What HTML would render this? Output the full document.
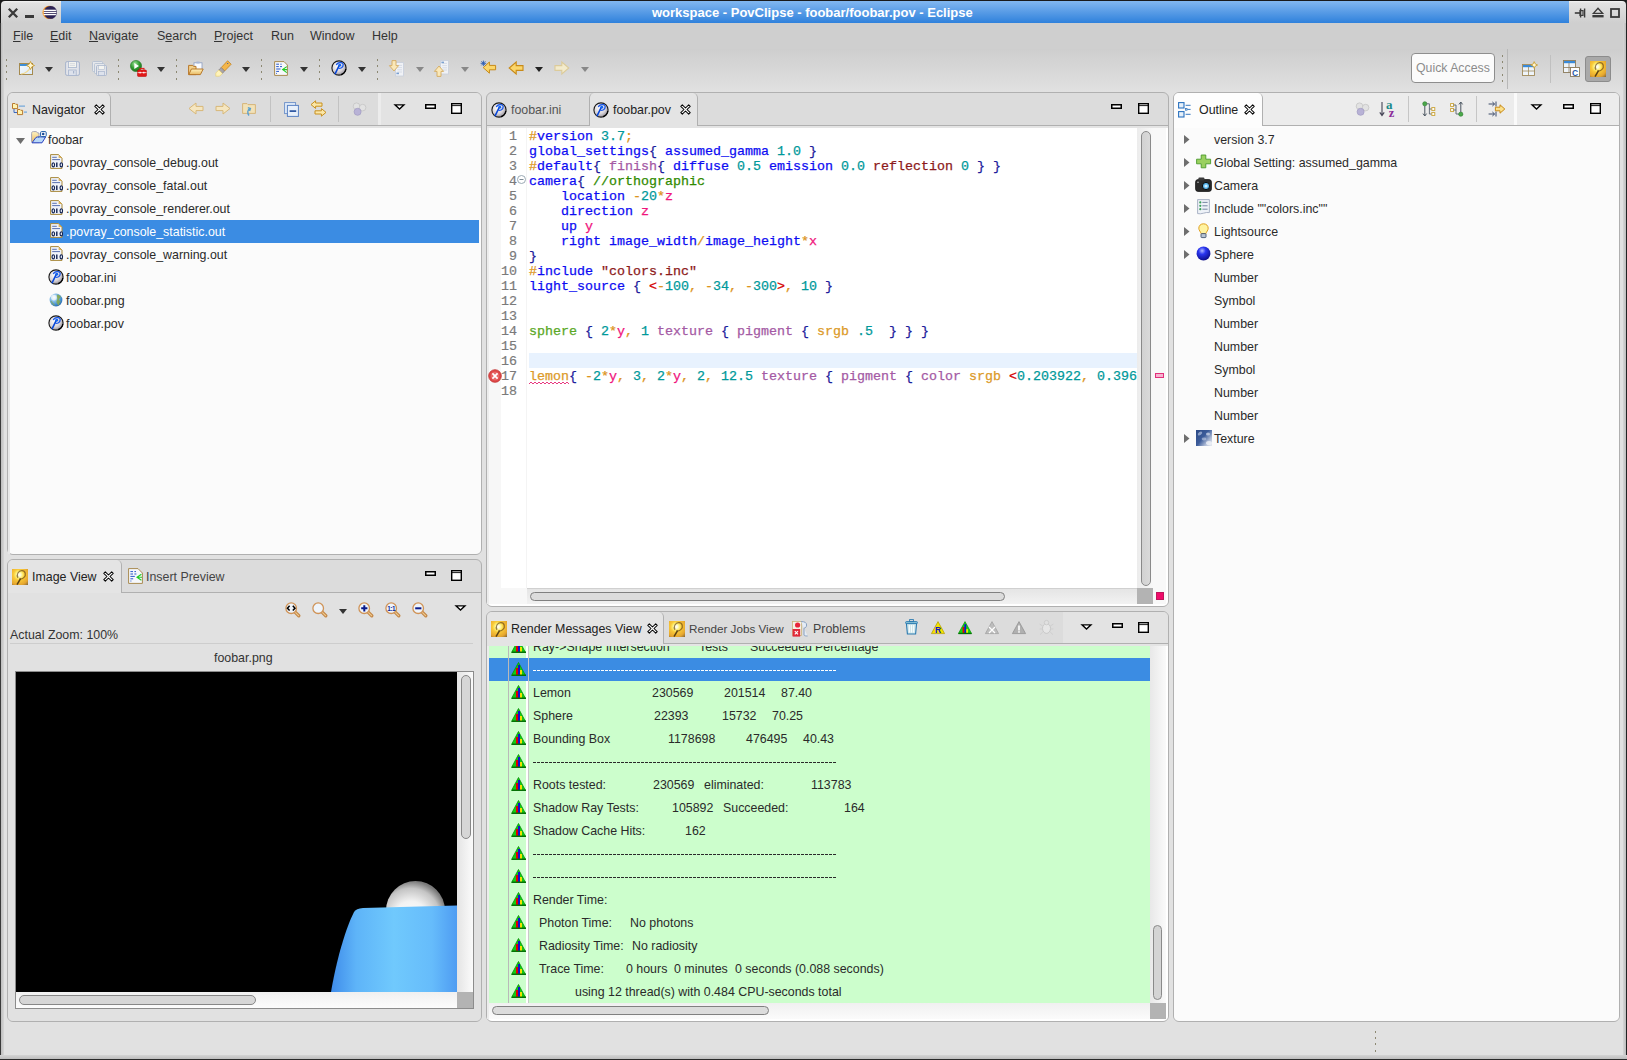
<!DOCTYPE html><html><head><meta charset="utf-8"><title>Eclipse</title><style>
*{box-sizing:border-box}
html,body{margin:0;padding:0}
body{width:1627px;height:1060px;overflow:hidden;position:relative;background:#e1e1e1;font-family:"Liberation Sans",sans-serif;font-size:12.4px;color:#2f2f2f}
.a{position:absolute}
.t{position:absolute;white-space:pre;line-height:16px}
.m{position:absolute;white-space:pre;font-family:"Liberation Mono",monospace;font-size:13.33px;line-height:15px}
.m span{-webkit-text-stroke:0.25px currentColor}
svg{position:absolute;overflow:visible}
</style></head><body><!DOCTYPE html><html><head><meta charset="utf-8"><title>Eclipse</title><style>
*{box-sizing:border-box}
html,body{margin:0;padding:0}
body{width:1627px;height:1060px;overflow:hidden;position:relative;background:#e1e1e1;font-family:"Liberation Sans",sans-serif;font-size:12.4px;color:#2f2f2f}
.a{position:absolute}
.t{position:absolute;white-space:pre;line-height:16px}
.m{position:absolute;white-space:pre;font-family:"Liberation Mono",monospace;font-size:13.33px;line-height:15px}
.m span{-webkit-text-stroke:0.25px currentColor}
svg{position:absolute;overflow:visible}
</style></head><body><div class="a" style="left:0px;top:0px;width:1627px;height:1060px;background:#e1e1e1"></div><div class="a" style="left:0px;top:0px;width:1627px;height:23px;background:#1a1a1a"></div><div class="a" style="left:1px;top:1px;width:60px;height:22px;background:linear-gradient(#f4f4f4 0,#e2e2e2 2px,#cfcfcf 100%);border-top-left-radius:4px"></div><div class="a" style="left:61px;top:1px;width:1508px;height:22px;background:linear-gradient(#82b7f0,#2f81dc)"></div><div class="a" style="left:1569px;top:1px;width:57px;height:22px;background:linear-gradient(#f4f4f4 0,#e2e2e2 2px,#cfcfcf 100%);border-top-right-radius:4px"></div><div class="t" style="left:652px;top:4.5px;font-weight:bold;color:#fff;font-size:13px">workspace - PovClipse - foobar/foobar.pov - Eclipse</div><div class="a" style="left:0px;top:23px;width:1627px;height:26px;background:#cfcfcf"></div><div class="a" style="left:0px;top:49px;width:1627px;height:43px;background:linear-gradient(#cecece,#e1e1e1)"></div><div class="a" style="left:0px;top:23px;width:1px;height:1037px;background:#3a3a3a"></div><div class="a" style="left:1px;top:23px;width:3px;height:1037px;background:linear-gradient(90deg,#bdbdbd,#d6d6d6)"></div><div class="a" style="left:1626px;top:0px;width:1px;height:1060px;background:#222"></div><div class="a" style="left:1623px;top:23px;width:3px;height:1037px;background:linear-gradient(90deg,#d6d6d6,#bdbdbd)"></div><div class="a" style="left:0px;top:1059px;width:1627px;height:1px;background:#2a2a2a"></div><div class="a" style="left:0px;top:1055px;width:1627px;height:4px;background:linear-gradient(#d4d4d4,#bdbdbd)"></div><div class="t" style="left:13px;top:28px;font-size:12.5px;color:#333"><u>F</u>ile</div><div class="t" style="left:50px;top:28px;font-size:12.5px;color:#333"><u>E</u>dit</div><div class="t" style="left:89px;top:28px;font-size:12.5px;color:#333"><u>N</u>avigate</div><div class="t" style="left:157px;top:28px;font-size:12.5px;color:#333">S<u>e</u>arch</div><div class="t" style="left:214px;top:28px;font-size:12.5px;color:#333"><u>P</u>roject</div><div class="t" style="left:271px;top:28px;font-size:12.5px;color:#333">Run</div><div class="t" style="left:310px;top:28px;font-size:12.5px;color:#333">Window</div><div class="t" style="left:372px;top:28px;font-size:12.5px;color:#333">Help</div><div class="a" style="left:7px;top:92px;width:475px;height:463px;border:1px solid #b0b0b0;border-radius:6px;background:#dcdcdc"></div><div class="a" style="left:7px;top:559px;width:475px;height:463px;border:1px solid #b0b0b0;border-radius:6px;background:#dcdcdc"></div><div class="a" style="left:486px;top:92px;width:683px;height:515px;border:1px solid #b0b0b0;border-radius:6px;background:#dcdcdc"></div><div class="a" style="left:486px;top:611px;width:683px;height:411px;border:1px solid #b0b0b0;border-radius:6px;background:#dcdcdc"></div><div class="a" style="left:1173px;top:92px;width:447px;height:930px;border:1px solid #b0b0b0;border-radius:6px;background:#dcdcdc"></div><div class="a" style="left:8px;top:125px;width:473px;height:1px;background:#b0b0b0"></div><div class="a" style="left:8px;top:126px;width:473px;height:428px;background:#fbfbfb;border-bottom-left-radius:5px;border-bottom-right-radius:5px"></div><div class="a" style="left:8px;top:126px;width:473px;height:2px;background:#e4e4e4"></div><div class="a" style="left:8px;top:128px;width:2px;height:426px;background:#e8e8e8"></div><div class="a" style="left:8px;top:93px;width:103px;height:33px;background:#e4e4e4;border-right:1px solid #b0b0b0;border-top-left-radius:5px;border-top-right-radius:5px"></div><div class="t" style="left:32px;top:102px;color:#222">Navigator</div><div class="a" style="left:378px;top:93px;width:103px;height:32px;background:#e3e3e3;border-top-right-radius:5px"></div><div class="t" style="left:48px;top:132px;color:#2a2a2a">foobar</div><div class="t" style="left:66px;top:155px;color:#2a2a2a">.povray_console_debug.out</div><div class="t" style="left:66px;top:178px;color:#2a2a2a">.povray_console_fatal.out</div><div class="t" style="left:66px;top:201px;color:#2a2a2a">.povray_console_renderer.out</div><div class="a" style="left:10px;top:220px;width:469px;height:23px;background:#3b8ce3"></div><div class="t" style="left:66px;top:224px;color:#fff">.povray_console_statistic.out</div><div class="t" style="left:66px;top:247px;color:#2a2a2a">.povray_console_warning.out</div><div class="t" style="left:66px;top:270px;color:#2a2a2a">foobar.ini</div><div class="t" style="left:66px;top:293px;color:#2a2a2a">foobar.png</div><div class="t" style="left:66px;top:316px;color:#2a2a2a">foobar.pov</div><div class="a" style="left:8px;top:592px;width:473px;height:429px;background:#e1e1e1;border-bottom-left-radius:5px;border-bottom-right-radius:5px"></div><div class="a" style="left:8px;top:592px;width:473px;height:1px;background:#b0b0b0"></div><div class="a" style="left:8px;top:560px;width:114px;height:33px;background:#e4e4e4;border-right:1px solid #b0b0b0;border-top-left-radius:5px;border-top-right-radius:5px"></div><div class="t" style="left:32px;top:569px;color:#222">Image View</div><div class="t" style="left:146px;top:569px;color:#444">Insert Preview</div><div class="t" style="left:10px;top:627px;color:#333">Actual Zoom: 100%</div><div class="a" style="left:10px;top:643px;width:463px;height:1px;background:#cdcdcd"></div><div class="t" style="left:214px;top:650px;color:#333">foobar.png</div><div class="a" style="left:15px;top:671px;width:459px;height:338px;background:#f5f5f5;border:1px solid #8c8c8c"></div><div class="a" style="left:16px;top:672px;width:441px;height:320px;background:#000"></div><svg style="left:16px;top:672px" width="441" height="320"><defs><radialGradient id="gSph" cx="0.42" cy="0.62" r="0.62"><stop offset="0" stop-color="#ffffff"/><stop offset="0.45" stop-color="#f2f2f2"/><stop offset="0.8" stop-color="#c4c4c4"/><stop offset="1" stop-color="#7a7a7a"/></radialGradient><linearGradient id="gLem" x1="0" y1="0" x2="1" y2="0"><stop offset="0" stop-color="#3f8cea"/><stop offset="0.2" stop-color="#5eb4f8"/><stop offset="0.5" stop-color="#70c9fd"/><stop offset="0.8" stop-color="#66bcfb"/><stop offset="1" stop-color="#4e9cf2"/></linearGradient></defs><circle cx="399.5" cy="238.5" r="29.5" fill="url(#gSph)"/><path d="M315 320 C321 285 330 256 338 240 Q340 236.5 347 236 L441 233.5 V320 Z" fill="url(#gLem)"/></svg><div class="a" style="left:457px;top:672px;width:16px;height:320px;background:linear-gradient(90deg,#e4e4e4,#fbfbfb)"></div><div class="a" style="left:461px;top:675px;width:10px;height:164px;background:#d6d6d6;border:1px solid #878787;border-radius:5px"></div><div class="a" style="left:16px;top:992px;width:441px;height:16px;background:linear-gradient(#f0f0f0,#fcfcfc)"></div><div class="a" style="left:19px;top:995px;width:237px;height:10px;background:#d6d6d6;border:1px solid #878787;border-radius:5px"></div><div class="a" style="left:457px;top:992px;width:16px;height:16px;background:#b3b3b3"></div><div class="a" style="left:487px;top:125px;width:681px;height:1px;background:#b0b0b0"></div><div class="a" style="left:487px;top:126px;width:681px;height:480px;background:#fff;border-bottom-left-radius:5px;border-bottom-right-radius:5px"></div><div class="a" style="left:487px;top:126px;width:681px;height:2px;background:#e4e4e4"></div><div class="a" style="left:487px;top:128px;width:2px;height:476px;background:#ececec"></div><div class="a" style="left:589px;top:93px;width:109px;height:33px;background:#e4e4e4;border-left:1px solid #b0b0b0;border-right:1px solid #b0b0b0;border-top-left-radius:5px;border-top-right-radius:5px"></div><div class="t" style="left:511px;top:102px;color:#555">foobar.ini</div><div class="t" style="left:613px;top:102px;color:#222">foobar.pov</div><div class="a" style="left:487px;top:643px;width:681px;height:1px;background:#b0b0b0"></div><div class="a" style="left:487px;top:644px;width:681px;height:377px;background:#fff;border-bottom-left-radius:5px;border-bottom-right-radius:5px"></div><div class="a" style="left:487px;top:644px;width:681px;height:2px;background:#e4e4e4"></div><div class="a" style="left:487px;top:646px;width:2px;height:373px;background:#ececec"></div><div class="a" style="left:487px;top:612px;width:177px;height:32px;background:#e4e4e4;border-right:1px solid #b0b0b0;border-top-left-radius:5px;border-top-right-radius:5px"></div><div class="t" style="left:511px;top:621px;color:#222">Render Messages View</div><div class="t" style="left:689px;top:621px;color:#444;font-size:11.7px">Render Jobs View</div><div class="t" style="left:813px;top:621px;color:#444">Problems</div><div class="a" style="left:1174px;top:125px;width:445px;height:1px;background:#b0b0b0"></div><div class="a" style="left:1174px;top:126px;width:445px;height:895px;background:#fbfbfb;border-bottom-left-radius:5px;border-bottom-right-radius:5px"></div><div class="a" style="left:1174px;top:93px;width:445px;height:32px;background:#ececec;border-top-left-radius:5px;border-top-right-radius:5px"></div><div class="a" style="left:1174px;top:93px;width:89px;height:35px;background:#fdfdfd;border-top-left-radius:5px;border-top-right-radius:5px"></div><div class="a" style="left:1174px;top:93px;width:89px;height:33px;border-right:1px solid #b0b0b0;border-top-right-radius:5px"></div><div class="a" style="left:1517px;top:93px;width:102px;height:32px;background:#ececec;border-top-right-radius:5px"></div><div class="a" style="left:1514px;top:93px;width:3px;height:32px;background:#fafafa"></div><div class="t" style="left:1199px;top:102px;color:#222">Outline</div><div class="t" style="left:1214px;top:132px;color:#2a2a2a">version 3.7</div><div class="t" style="left:1214px;top:155px;color:#2a2a2a">Global Setting: assumed_gamma</div><div class="t" style="left:1214px;top:178px;color:#2a2a2a">Camera</div><div class="t" style="left:1214px;top:201px;color:#2a2a2a">Include &quot;&quot;colors.inc&quot;&quot;</div><div class="t" style="left:1214px;top:224px;color:#2a2a2a">Lightsource</div><div class="t" style="left:1214px;top:247px;color:#2a2a2a">Sphere</div><div class="t" style="left:1214px;top:270px;color:#2a2a2a">Number</div><div class="t" style="left:1214px;top:293px;color:#2a2a2a">Symbol</div><div class="t" style="left:1214px;top:316px;color:#2a2a2a">Number</div><div class="t" style="left:1214px;top:339px;color:#2a2a2a">Number</div><div class="t" style="left:1214px;top:362px;color:#2a2a2a">Symbol</div><div class="t" style="left:1214px;top:385px;color:#2a2a2a">Number</div><div class="t" style="left:1214px;top:408px;color:#2a2a2a">Number</div><div class="t" style="left:1214px;top:431px;color:#2a2a2a">Texture</div><div class="a" style="left:489px;top:128px;width:12px;height:460px;background:#f7f7f7"></div><div class="a" style="left:501px;top:128px;width:26px;height:460px;background:#fff"></div><div class="a" style="left:526px;top:128px;width:1px;height:460px;background:#f4f4f4"></div><div class="a" style="left:529px;top:353px;width:608px;height:15px;background:#e8f2fe"></div><div class="a" style="left:489px;top:129px;width:648px;height:459px;overflow:hidden;-webkit-text-stroke:0.2px currentColor"><div class="m" style="left:20px;top:0px;color:#7a7a7a">1</div><div class="m" style="left:40px;top:0px"><span style="color:#dc9420">#</span><span style="color:#0c0cf2">version</span><span style="color:#00999a"> 3.7</span><span style="color:#dc9420">;</span></div><div class="m" style="left:20px;top:15px;color:#7a7a7a">2</div><div class="m" style="left:40px;top:15px"><span style="color:#0c0cf2">global_settings</span><span style="color:#1c1c9c">{</span><span style="color:#0c0cf2"> assumed_gamma</span><span style="color:#00999a"> 1.0</span><span style="color:#1c1c9c"> }</span></div><div class="m" style="left:20px;top:30px;color:#7a7a7a">3</div><div class="m" style="left:40px;top:30px"><span style="color:#dc9420">#</span><span style="color:#0c0cf2">default</span><span style="color:#1c1c9c">{</span><span style="color:#a45aa4"> finish</span><span style="color:#1c1c9c">{</span><span style="color:#0c0cf2"> diffuse</span><span style="color:#00999a"> 0.5</span><span style="color:#0c0cf2"> emission</span><span style="color:#00999a"> 0.0</span><span style="color:#8c1a1a"> reflection</span><span style="color:#00999a"> 0</span><span style="color:#1c1c9c"> } }</span></div><div class="m" style="left:20px;top:45px;color:#7a7a7a">4</div><div class="m" style="left:40px;top:45px"><span style="color:#0c0cf2">camera</span><span style="color:#1c1c9c">{</span><span style="color:#2f8a00"> //orthographic</span></div><div class="m" style="left:20px;top:60px;color:#7a7a7a">5</div><div class="m" style="left:40px;top:60px"><span style="color:#0c0cf2">    location </span><span style="color:#dc9420">-</span><span style="color:#00999a">20</span><span style="color:#dc9420">*</span><span style="color:#f0147c">z</span></div><div class="m" style="left:20px;top:75px;color:#7a7a7a">6</div><div class="m" style="left:40px;top:75px"><span style="color:#0c0cf2">    direction </span><span style="color:#f0147c">z</span></div><div class="m" style="left:20px;top:90px;color:#7a7a7a">7</div><div class="m" style="left:40px;top:90px"><span style="color:#0c0cf2">    up </span><span style="color:#f0147c">y</span></div><div class="m" style="left:20px;top:105px;color:#7a7a7a">8</div><div class="m" style="left:40px;top:105px"><span style="color:#0c0cf2">    right image_width</span><span style="color:#dc9420">/</span><span style="color:#0c0cf2">image_height</span><span style="color:#dc9420">*</span><span style="color:#f0147c">x</span></div><div class="m" style="left:20px;top:120px;color:#7a7a7a">9</div><div class="m" style="left:40px;top:120px"><span style="color:#1c1c9c">}</span></div><div class="m" style="left:12px;top:135px;color:#7a7a7a">10</div><div class="m" style="left:40px;top:135px"><span style="color:#dc9420">#</span><span style="color:#0c0cf2">include </span><span style="color:#8c1a1a">&quot;colors.inc&quot;</span></div><div class="m" style="left:12px;top:150px;color:#7a7a7a">11</div><div class="m" style="left:40px;top:150px"><span style="color:#0c0cf2">light_source</span><span style="color:#1c1c9c"> { </span><span style="color:#d40000">&lt;</span><span style="color:#dc9420">-</span><span style="color:#00999a">100</span><span style="color:#dc9420">, -</span><span style="color:#00999a">34</span><span style="color:#dc9420">, -</span><span style="color:#00999a">300</span><span style="color:#d40000">&gt;</span><span style="color:#dc9420">, </span><span style="color:#00999a">10</span><span style="color:#1c1c9c"> }</span></div><div class="m" style="left:12px;top:165px;color:#7a7a7a">12</div><div class="m" style="left:12px;top:180px;color:#7a7a7a">13</div><div class="m" style="left:12px;top:195px;color:#7a7a7a">14</div><div class="m" style="left:40px;top:195px"><span style="color:#5aa826">sphere</span><span style="color:#1c1c9c"> { </span><span style="color:#00999a">2</span><span style="color:#dc9420">*</span><span style="color:#f0147c">y</span><span style="color:#dc9420">, </span><span style="color:#00999a">1</span><span style="color:#a45aa4"> texture</span><span style="color:#1c1c9c"> { </span><span style="color:#a45aa4">pigment</span><span style="color:#1c1c9c"> { </span><span style="color:#dc9a28">srgb</span><span style="color:#00999a"> .5  </span><span style="color:#1c1c9c">} } }</span></div><div class="m" style="left:12px;top:210px;color:#7a7a7a">15</div><div class="m" style="left:12px;top:225px;color:#7a7a7a">16</div><div class="m" style="left:12px;top:240px;color:#7a7a7a">17</div><div class="m" style="left:40px;top:240px"><span style="color:#dc9a28">lemon</span><span style="color:#1c1c9c">{ </span><span style="color:#dc9420">-</span><span style="color:#00999a">2</span><span style="color:#dc9420">*</span><span style="color:#f0147c">y</span><span style="color:#dc9420">, </span><span style="color:#00999a">3</span><span style="color:#dc9420">, </span><span style="color:#00999a">2</span><span style="color:#dc9420">*</span><span style="color:#f0147c">y</span><span style="color:#dc9420">, </span><span style="color:#00999a">2</span><span style="color:#dc9420">, </span><span style="color:#00999a">12.5</span><span style="color:#a45aa4"> texture</span><span style="color:#1c1c9c"> { </span><span style="color:#a45aa4">pigment</span><span style="color:#1c1c9c"> { </span><span style="color:#a45aa4">color </span><span style="color:#dc9a28">srgb </span><span style="color:#d40000">&lt;</span><span style="color:#00999a">0.203922</span><span style="color:#dc9420">, </span><span style="color:#00999a">0.396</span></div><div class="m" style="left:12px;top:255px;color:#7a7a7a">18</div></div><svg style="left:517px;top:175px" width="10" height="10"><circle cx="4.5" cy="4.5" r="4" fill="#fff" stroke="#9aa9b4" stroke-width="1"/><line x1="2.5" y1="4.5" x2="6.5" y2="4.5" stroke="#7d8b96" stroke-width="1"/></svg><svg style="left:488px;top:369px" width="14" height="14"><circle cx="7" cy="7" r="6.3" fill="#e04a4a" stroke="#c03030" stroke-width="0.8"/><circle cx="7" cy="7" r="4.2" fill="#ee8a8a" opacity="0.5"/><path d="M4.4 4.4L9.6 9.6M9.6 4.4L4.4 9.6" stroke="#fff" stroke-width="1.7"/></svg><svg style="left:529px;top:381px" width="41" height="4"><path d="M0 3 L2 1 L4 3 L6 1 L8 3 L10 1 L12 3 L14 1 L16 3 L18 1 L20 3 L22 1 L24 3 L26 1 L28 3 L30 1 L32 3 L34 1 L36 3 L38 1 L40 3" fill="none" stroke="#e8397f" stroke-width="1"/></svg><div class="a" style="left:1137px;top:128px;width:16px;height:460px;background:linear-gradient(90deg,#ececec,#f8f8f8)"></div><div class="a" style="left:1141px;top:131px;width:10px;height:455px;background:linear-gradient(90deg,#d2d2d2,#dadada);border:1px solid #8a8a8a;border-radius:5px"></div><div class="a" style="left:1153px;top:128px;width:13px;height:476px;background:#f8f8f8"></div><div class="a" style="left:1155px;top:373px;width:9px;height:5px;background:#f7b3cf;border:1px solid #e2307c"></div><div class="a" style="left:1156px;top:592px;width:8px;height:8px;background:#ef0b6a;border:1px solid #c0145a"></div><div class="a" style="left:489px;top:588px;width:38px;height:16px;background:#f7f7f7"></div><div class="a" style="left:527px;top:588px;width:610px;height:16px;background:linear-gradient(#e4e4e4,#f2f2f2)"></div><div class="a" style="left:527px;top:588px;width:610px;height:1px;background:#d0d0d0"></div><div class="a" style="left:530px;top:592px;width:475px;height:9px;background:#dcdcdc;border:1px solid #808080;border-radius:5px"></div><div class="a" style="left:1137px;top:588px;width:16px;height:16px;background:#b3b3b3"></div><div class="a" style="left:489px;top:646px;width:661px;height:357px;overflow:hidden;background:#ccfecc"><div class="a" style="left:37px;top:0;width:2px;height:357px;background:#fff"></div><div class="t" style="left:44px;top:-7px;color:#2a2a2a">Ray-&gt;Shape Intersection</div><div class="t" style="left:210px;top:-7px;color:#2a2a2a">Tests</div><div class="t" style="left:261px;top:-7px;color:#2a2a2a">Succeeded</div><div class="t" style="left:326px;top:-7px;color:#2a2a2a">Percentage</div><svg style="left:22px;top:-7px" width="16" height="14"><path d="M7.5 0.5 L14.5 13.5 L0.5 13.5 Z" fill="#10d010" stroke="#0a8a0a" stroke-width="0.8"/><rect x="5" y="6" width="2" height="7" fill="#e00000"/><rect x="7" y="3" width="2" height="10" fill="#1010d0"/><rect x="9" y="8" width="2" height="5" fill="#f0e000"/><rect x="1" y="12.5" width="14" height="1.5" fill="#067006"/></svg><div class="a" style="left:0px;top:12px;width:661px;height:23px;background:#3b8ce3"></div><div class="a" style="left:44px;top:24px;width:304px;height:1px;background:repeating-linear-gradient(90deg,#fff 0 3px,transparent 3px 4px)"></div><svg style="left:22px;top:16px" width="16" height="14"><path d="M7.5 0.5 L14.5 13.5 L0.5 13.5 Z" fill="#10d010" stroke="#0a8a0a" stroke-width="0.8"/><rect x="5" y="6" width="2" height="7" fill="#e00000"/><rect x="7" y="3" width="2" height="10" fill="#1010d0"/><rect x="9" y="8" width="2" height="5" fill="#f0e000"/><rect x="1" y="12.5" width="14" height="1.5" fill="#067006"/></svg><div class="t" style="left:44px;top:39px;color:#2a2a2a">Lemon</div><div class="t" style="left:163px;top:39px;color:#2a2a2a">230569</div><div class="t" style="left:235px;top:39px;color:#2a2a2a">201514</div><div class="t" style="left:292px;top:39px;color:#2a2a2a">87.40</div><svg style="left:22px;top:39px" width="16" height="14"><path d="M7.5 0.5 L14.5 13.5 L0.5 13.5 Z" fill="#10d010" stroke="#0a8a0a" stroke-width="0.8"/><rect x="5" y="6" width="2" height="7" fill="#e00000"/><rect x="7" y="3" width="2" height="10" fill="#1010d0"/><rect x="9" y="8" width="2" height="5" fill="#f0e000"/><rect x="1" y="12.5" width="14" height="1.5" fill="#067006"/></svg><div class="t" style="left:44px;top:62px;color:#2a2a2a">Sphere</div><div class="t" style="left:165px;top:62px;color:#2a2a2a">22393</div><div class="t" style="left:233px;top:62px;color:#2a2a2a">15732</div><div class="t" style="left:283px;top:62px;color:#2a2a2a">70.25</div><svg style="left:22px;top:62px" width="16" height="14"><path d="M7.5 0.5 L14.5 13.5 L0.5 13.5 Z" fill="#10d010" stroke="#0a8a0a" stroke-width="0.8"/><rect x="5" y="6" width="2" height="7" fill="#e00000"/><rect x="7" y="3" width="2" height="10" fill="#1010d0"/><rect x="9" y="8" width="2" height="5" fill="#f0e000"/><rect x="1" y="12.5" width="14" height="1.5" fill="#067006"/></svg><div class="t" style="left:44px;top:85px;color:#2a2a2a">Bounding Box</div><div class="t" style="left:179px;top:85px;color:#2a2a2a">1178698</div><div class="t" style="left:257px;top:85px;color:#2a2a2a">476495</div><div class="t" style="left:314px;top:85px;color:#2a2a2a">40.43</div><svg style="left:22px;top:85px" width="16" height="14"><path d="M7.5 0.5 L14.5 13.5 L0.5 13.5 Z" fill="#10d010" stroke="#0a8a0a" stroke-width="0.8"/><rect x="5" y="6" width="2" height="7" fill="#e00000"/><rect x="7" y="3" width="2" height="10" fill="#1010d0"/><rect x="9" y="8" width="2" height="5" fill="#f0e000"/><rect x="1" y="12.5" width="14" height="1.5" fill="#067006"/></svg><div class="a" style="left:44px;top:116px;width:304px;height:1px;background:repeating-linear-gradient(90deg,#2a2a2a 0 3px,transparent 3px 4px)"></div><svg style="left:22px;top:108px" width="16" height="14"><path d="M7.5 0.5 L14.5 13.5 L0.5 13.5 Z" fill="#10d010" stroke="#0a8a0a" stroke-width="0.8"/><rect x="5" y="6" width="2" height="7" fill="#e00000"/><rect x="7" y="3" width="2" height="10" fill="#1010d0"/><rect x="9" y="8" width="2" height="5" fill="#f0e000"/><rect x="1" y="12.5" width="14" height="1.5" fill="#067006"/></svg><div class="t" style="left:44px;top:131px;color:#2a2a2a">Roots tested:</div><div class="t" style="left:164px;top:131px;color:#2a2a2a">230569</div><div class="t" style="left:215px;top:131px;color:#2a2a2a">eliminated:</div><div class="t" style="left:322px;top:131px;color:#2a2a2a">113783</div><svg style="left:22px;top:131px" width="16" height="14"><path d="M7.5 0.5 L14.5 13.5 L0.5 13.5 Z" fill="#10d010" stroke="#0a8a0a" stroke-width="0.8"/><rect x="5" y="6" width="2" height="7" fill="#e00000"/><rect x="7" y="3" width="2" height="10" fill="#1010d0"/><rect x="9" y="8" width="2" height="5" fill="#f0e000"/><rect x="1" y="12.5" width="14" height="1.5" fill="#067006"/></svg><div class="t" style="left:44px;top:154px;color:#2a2a2a">Shadow Ray Tests:</div><div class="t" style="left:183px;top:154px;color:#2a2a2a">105892</div><div class="t" style="left:234px;top:154px;color:#2a2a2a">Succeeded:</div><div class="t" style="left:355px;top:154px;color:#2a2a2a">164</div><svg style="left:22px;top:154px" width="16" height="14"><path d="M7.5 0.5 L14.5 13.5 L0.5 13.5 Z" fill="#10d010" stroke="#0a8a0a" stroke-width="0.8"/><rect x="5" y="6" width="2" height="7" fill="#e00000"/><rect x="7" y="3" width="2" height="10" fill="#1010d0"/><rect x="9" y="8" width="2" height="5" fill="#f0e000"/><rect x="1" y="12.5" width="14" height="1.5" fill="#067006"/></svg><div class="t" style="left:44px;top:177px;color:#2a2a2a">Shadow Cache Hits:</div><div class="t" style="left:196px;top:177px;color:#2a2a2a">162</div><svg style="left:22px;top:177px" width="16" height="14"><path d="M7.5 0.5 L14.5 13.5 L0.5 13.5 Z" fill="#10d010" stroke="#0a8a0a" stroke-width="0.8"/><rect x="5" y="6" width="2" height="7" fill="#e00000"/><rect x="7" y="3" width="2" height="10" fill="#1010d0"/><rect x="9" y="8" width="2" height="5" fill="#f0e000"/><rect x="1" y="12.5" width="14" height="1.5" fill="#067006"/></svg><div class="a" style="left:44px;top:208px;width:304px;height:1px;background:repeating-linear-gradient(90deg,#2a2a2a 0 3px,transparent 3px 4px)"></div><svg style="left:22px;top:200px" width="16" height="14"><path d="M7.5 0.5 L14.5 13.5 L0.5 13.5 Z" fill="#10d010" stroke="#0a8a0a" stroke-width="0.8"/><rect x="5" y="6" width="2" height="7" fill="#e00000"/><rect x="7" y="3" width="2" height="10" fill="#1010d0"/><rect x="9" y="8" width="2" height="5" fill="#f0e000"/><rect x="1" y="12.5" width="14" height="1.5" fill="#067006"/></svg><div class="a" style="left:44px;top:231px;width:304px;height:1px;background:repeating-linear-gradient(90deg,#2a2a2a 0 3px,transparent 3px 4px)"></div><svg style="left:22px;top:223px" width="16" height="14"><path d="M7.5 0.5 L14.5 13.5 L0.5 13.5 Z" fill="#10d010" stroke="#0a8a0a" stroke-width="0.8"/><rect x="5" y="6" width="2" height="7" fill="#e00000"/><rect x="7" y="3" width="2" height="10" fill="#1010d0"/><rect x="9" y="8" width="2" height="5" fill="#f0e000"/><rect x="1" y="12.5" width="14" height="1.5" fill="#067006"/></svg><div class="t" style="left:44px;top:246px;color:#2a2a2a">Render Time:</div><svg style="left:22px;top:246px" width="16" height="14"><path d="M7.5 0.5 L14.5 13.5 L0.5 13.5 Z" fill="#10d010" stroke="#0a8a0a" stroke-width="0.8"/><rect x="5" y="6" width="2" height="7" fill="#e00000"/><rect x="7" y="3" width="2" height="10" fill="#1010d0"/><rect x="9" y="8" width="2" height="5" fill="#f0e000"/><rect x="1" y="12.5" width="14" height="1.5" fill="#067006"/></svg><div class="t" style="left:50px;top:269px;color:#2a2a2a">Photon Time:</div><div class="t" style="left:141px;top:269px;color:#2a2a2a">No photons</div><svg style="left:22px;top:269px" width="16" height="14"><path d="M7.5 0.5 L14.5 13.5 L0.5 13.5 Z" fill="#10d010" stroke="#0a8a0a" stroke-width="0.8"/><rect x="5" y="6" width="2" height="7" fill="#e00000"/><rect x="7" y="3" width="2" height="10" fill="#1010d0"/><rect x="9" y="8" width="2" height="5" fill="#f0e000"/><rect x="1" y="12.5" width="14" height="1.5" fill="#067006"/></svg><div class="t" style="left:50px;top:292px;color:#2a2a2a">Radiosity Time:</div><div class="t" style="left:143px;top:292px;color:#2a2a2a">No radiosity</div><svg style="left:22px;top:292px" width="16" height="14"><path d="M7.5 0.5 L14.5 13.5 L0.5 13.5 Z" fill="#10d010" stroke="#0a8a0a" stroke-width="0.8"/><rect x="5" y="6" width="2" height="7" fill="#e00000"/><rect x="7" y="3" width="2" height="10" fill="#1010d0"/><rect x="9" y="8" width="2" height="5" fill="#f0e000"/><rect x="1" y="12.5" width="14" height="1.5" fill="#067006"/></svg><div class="t" style="left:50px;top:315px;color:#2a2a2a">Trace Time:</div><div class="t" style="left:137px;top:315px;color:#2a2a2a">0 hours</div><div class="t" style="left:185px;top:315px;color:#2a2a2a">0 minutes</div><div class="t" style="left:246px;top:315px;color:#2a2a2a">0 seconds (0.088 seconds)</div><svg style="left:22px;top:315px" width="16" height="14"><path d="M7.5 0.5 L14.5 13.5 L0.5 13.5 Z" fill="#10d010" stroke="#0a8a0a" stroke-width="0.8"/><rect x="5" y="6" width="2" height="7" fill="#e00000"/><rect x="7" y="3" width="2" height="10" fill="#1010d0"/><rect x="9" y="8" width="2" height="5" fill="#f0e000"/><rect x="1" y="12.5" width="14" height="1.5" fill="#067006"/></svg><div class="t" style="left:86px;top:338px;color:#2a2a2a">using 12 thread(s) with 0.484 CPU-seconds total</div><svg style="left:22px;top:338px" width="16" height="14"><path d="M7.5 0.5 L14.5 13.5 L0.5 13.5 Z" fill="#10d010" stroke="#0a8a0a" stroke-width="0.8"/><rect x="5" y="6" width="2" height="7" fill="#e00000"/><rect x="7" y="3" width="2" height="10" fill="#1010d0"/><rect x="9" y="8" width="2" height="5" fill="#f0e000"/><rect x="1" y="12.5" width="14" height="1.5" fill="#067006"/></svg><div class="a" style="left:19px;top:0;width:1px;height:357px;background:#b9b9b9"></div><div class="a" style="left:39px;top:0;width:1px;height:357px;background:#c8c8c8"></div></div><div class="a" style="left:1150px;top:646px;width:16px;height:357px;background:linear-gradient(90deg,#e8e8e8,#fafafa)"></div><div class="a" style="left:1153px;top:925px;width:9px;height:75px;background:#d4d4d4;border:1px solid #8a8a8a;border-radius:5px"></div><div class="a" style="left:489px;top:1003px;width:661px;height:16px;background:linear-gradient(#f0f0f0,#fbfbfb)"></div><div class="a" style="left:492px;top:1006px;width:277px;height:9px;background:#dcdcdc;border:1px solid #808080;border-radius:5px"></div><div class="a" style="left:1150px;top:1003px;width:16px;height:16px;background:#b3b3b3"></div><svg width="0" height="0" style="position:absolute"><defs>
<radialGradient id="gPov" cx="0.4" cy="0.35" r="0.7"><stop offset="0" stop-color="#ffffff"/><stop offset="0.6" stop-color="#d8d4d8"/><stop offset="1" stop-color="#8a8690"/></radialGradient>
<radialGradient id="gGold" cx="0.42" cy="0.36" r="0.85"><stop offset="0" stop-color="#ffffff"/><stop offset="0.12" stop-color="#fff57a"/><stop offset="0.4" stop-color="#f8c838"/><stop offset="0.75" stop-color="#e6a62e"/><stop offset="1" stop-color="#86683a"/></radialGradient>
<radialGradient id="gBlueBall" cx="0.4" cy="0.3" r="0.75"><stop offset="0" stop-color="#b0b8ff"/><stop offset="0.35" stop-color="#2a36f0"/><stop offset="1" stop-color="#0a0a80"/></radialGradient>
<radialGradient id="gGreen" cx="0.4" cy="0.3" r="0.75"><stop offset="0" stop-color="#9ee09a"/><stop offset="0.5" stop-color="#35a035"/><stop offset="1" stop-color="#1a6a1a"/></radialGradient>
<radialGradient id="gGlobe" cx="0.35" cy="0.3" r="0.8"><stop offset="0" stop-color="#f4fbff"/><stop offset="0.35" stop-color="#8cc2ea"/><stop offset="0.75" stop-color="#3c88cc"/><stop offset="1" stop-color="#2a5a9a"/></radialGradient>
<radialGradient id="gGlow" cx="0.5" cy="0.5" r="0.5"><stop offset="0" stop-color="#ffffff"/><stop offset="0.3" stop-color="#fffbd0"/><stop offset="0.65" stop-color="#fff27a" stop-opacity="0.7"/><stop offset="1" stop-color="#ffe040" stop-opacity="0"/></radialGradient>
<linearGradient id="gFold" x1="0" y1="0" x2="0" y2="1"><stop offset="0" stop-color="#fff3c0"/><stop offset="1" stop-color="#e8b860"/></linearGradient>
<linearGradient id="gWin" x1="0" y1="0" x2="1" y2="1"><stop offset="0" stop-color="#f4faff"/><stop offset="1" stop-color="#dbe8f5"/></linearGradient>
<linearGradient id="gSphere" x1="0" y1="0" x2="1" y2="0"><stop offset="0" stop-color="#bdbdbd"/><stop offset="0.5" stop-color="#ffffff"/><stop offset="1" stop-color="#9a9a9a"/></linearGradient>
<linearGradient id="gLemon" x1="0" y1="0" x2="1" y2="0"><stop offset="0" stop-color="#4aa0f0"/><stop offset="0.45" stop-color="#6ec6fc"/><stop offset="1" stop-color="#4a98ec"/></linearGradient>
</defs></svg><svg style="left:7px;top:7px" width="12" height="12"><path d="M1.8 1.8L10.2 10.2M10.2 1.8L1.8 10.2" stroke="#3a3a3a" stroke-width="2.3"/></svg><div class="a" style="left:25px;top:15px;width:9px;height:3px;background:#3a3a3a"></div><svg style="left:41px;top:5px" width="16" height="15" viewBox="0 0 16 15"><circle cx="8.1" cy="7.4" r="6.6" fill="#f7941e"/><circle cx="9.3" cy="7.4" r="6.4" fill="#2c2255"/><rect x="2.6" y="4.7" width="13" height="1.35" fill="#fff"/><rect x="2.6" y="6.8" width="13" height="1.3" fill="#fff"/><rect x="2.6" y="8.9" width="13" height="1.35" fill="#fff"/><path d="M15.7 7.4 A6.4 6.4 0 0 1 2.9 7.4 A6.4 6.4 0 0 1 15.7 7.4" fill="none" stroke="#2c2255" stroke-width="0.5" clip-path="inset(0 0 0 50%)"/></svg><svg style="left:1574px;top:8px" width="12" height="10"><path d="M0.8 5 H6" stroke="#3a3a3a" stroke-width="1.6"/><rect x="6" y="2.6" width="3" height="4.8" fill="#ddd" stroke="#3a3a3a" stroke-width="1.2"/><path d="M6.6 0.5V9.5M10.6 0.5V9.5" stroke="#3a3a3a" stroke-width="1.4"/></svg><svg style="left:1592px;top:7px" width="12" height="11"><path d="M1.4 6.4 L6 1.2 L10.6 6.4 Z" fill="none" stroke="#3a3a3a" stroke-width="1.4"/><rect x="0.4" y="8" width="11.2" height="2.4" fill="#3a3a3a"/></svg><svg style="left:1610px;top:8px" width="10" height="10"><rect x="1" y="1" width="8" height="8" fill="none" stroke="#3a3a3a" stroke-width="1.8"/></svg><div class="a" style="left:6px;top:59px;width:1px;height:2px;background:#8c8872"></div><div class="a" style="left:6px;top:65px;width:1px;height:2px;background:#8c8872"></div><div class="a" style="left:6px;top:71px;width:1px;height:2px;background:#8c8872"></div><div class="a" style="left:6px;top:78px;width:1px;height:2px;background:#8c8872"></div><div class="a" style="left:118px;top:59px;width:1px;height:2px;background:#8c8872"></div><div class="a" style="left:118px;top:65px;width:1px;height:2px;background:#8c8872"></div><div class="a" style="left:118px;top:71px;width:1px;height:2px;background:#8c8872"></div><div class="a" style="left:118px;top:78px;width:1px;height:2px;background:#8c8872"></div><div class="a" style="left:176px;top:59px;width:1px;height:2px;background:#8c8872"></div><div class="a" style="left:176px;top:65px;width:1px;height:2px;background:#8c8872"></div><div class="a" style="left:176px;top:71px;width:1px;height:2px;background:#8c8872"></div><div class="a" style="left:176px;top:78px;width:1px;height:2px;background:#8c8872"></div><div class="a" style="left:261px;top:59px;width:1px;height:2px;background:#8c8872"></div><div class="a" style="left:261px;top:65px;width:1px;height:2px;background:#8c8872"></div><div class="a" style="left:261px;top:71px;width:1px;height:2px;background:#8c8872"></div><div class="a" style="left:261px;top:78px;width:1px;height:2px;background:#8c8872"></div><div class="a" style="left:319px;top:59px;width:1px;height:2px;background:#8c8872"></div><div class="a" style="left:319px;top:65px;width:1px;height:2px;background:#8c8872"></div><div class="a" style="left:319px;top:71px;width:1px;height:2px;background:#8c8872"></div><div class="a" style="left:319px;top:78px;width:1px;height:2px;background:#8c8872"></div><div class="a" style="left:377px;top:59px;width:1px;height:2px;background:#8c8872"></div><div class="a" style="left:377px;top:65px;width:1px;height:2px;background:#8c8872"></div><div class="a" style="left:377px;top:71px;width:1px;height:2px;background:#8c8872"></div><div class="a" style="left:377px;top:78px;width:1px;height:2px;background:#8c8872"></div><svg style="left:19px;top:61px" width="16" height="15" viewBox="0 0 16 15"><rect x="0.5" y="2.5" width="13" height="11" fill="url(#gWin)" stroke="#a58a4e" stroke-width="1"/><rect x="1" y="3" width="8" height="2" fill="#3d8fd8"/><path d="M2 13 C7 12.5 10 10 12 5" stroke="#f0d890" stroke-width="1.2" fill="none"/><path d="M11.5 0.5 L12.8 3.2 L15.5 4.5 L12.8 5.8 L11.5 8.5 L10.2 5.8 L7.5 4.5 L10.2 3.2 Z" fill="#fff6d0" stroke="#c89a2a" stroke-width="0.9"/></svg><svg style="left:45px;top:67px" width="8" height="5"><path d="M0 0H8L4 5Z" fill="#333"/></svg><svg style="left:65px;top:61px" width="15" height="15" viewBox="0 0 15 15"><rect x="0.6" y="0.6" width="13.8" height="13.8" rx="1.5" fill="#e2e4ea" stroke="#a7b4cc" stroke-width="1"/><rect x="3.4" y="0.6" width="8" height="6" fill="#f4f4f0" stroke="#a7b4cc" stroke-width="0.8"/><path d="M4.8 2.6H10M4.8 4.4H10" stroke="#cfd4dc" stroke-width="0.8"/><rect x="3.6" y="9" width="7.6" height="5.4" fill="#dde2ec" stroke="#a7b4cc" stroke-width="0.8"/><rect x="8" y="10" width="1.2" height="2.5" fill="#a7b4cc"/></svg><svg style="left:92px;top:61px" width="15" height="15" viewBox="0 0 15 15"><rect x="0.5" y="0.5" width="10" height="10" rx="1" fill="#e6e8ec" stroke="#b0bccf" stroke-width="0.8"/><rect x="2.5" y="2.5" width="10" height="10" rx="1" fill="#e6e8ec" stroke="#b0bccf" stroke-width="0.8"/><rect x="4.5" y="4.5" width="10" height="10" rx="1" fill="#e2e4ea" stroke="#a7b4cc" stroke-width="0.9"/><rect x="6.5" y="4.6" width="6" height="4" fill="#f4f4f0" stroke="#b0bccf" stroke-width="0.6"/><rect x="6.6" y="10.5" width="5.8" height="4" fill="#dde2ec" stroke="#a7b4cc" stroke-width="0.7"/></svg><svg style="left:130px;top:60px" width="17" height="17" viewBox="0 0 17 17"><circle cx="6" cy="6" r="5.6" fill="url(#gGreen)" stroke="#2a7a2a" stroke-width="0.6"/><path d="M4.3 2.9 L9 6 L4.3 9.1 Z" fill="#fff"/><rect x="7.5" y="10" width="9" height="6.5" rx="1" fill="#e01818" stroke="#b00" stroke-width="0.5"/><rect x="10" y="8.4" width="4" height="2" fill="none" stroke="#e01818" stroke-width="1"/><path d="M7.6 12.6H16.4" stroke="#fff" stroke-width="0.7"/><rect x="9.5" y="11.8" width="1.2" height="1.6" fill="#fff"/><rect x="13.2" y="11.8" width="1.2" height="1.6" fill="#fff"/></svg><svg style="left:157px;top:67px" width="8" height="5"><path d="M0 0H8L4 5Z" fill="#333"/></svg><svg style="left:188px;top:61px" width="16" height="15" viewBox="0 0 16 15"><rect x="6" y="1.8" width="8" height="7" fill="#fafcff" stroke="#8a9cc0" stroke-width="0.8"/><rect x="8" y="0.5" width="4" height="2" rx="1" fill="#a8b8d6"/><path d="M0.6 4.4 H4.8 L5.6 5.4 H8 V13.6 H0.6 Z" fill="#f2d08a" stroke="#b8782a" stroke-width="1"/><path d="M0.8 13.6 L3.4 8 H15.2 L12.4 13.6 Z" fill="url(#gFold)" stroke="#b8782a" stroke-width="1"/></svg><svg style="left:215px;top:60px" width="17" height="17" viewBox="0 0 17 17"><path d="M12.6 0.8 L16.2 4.2 L9.6 11 L6.2 7.6 Z" fill="#f4b64a" stroke="#c48420" stroke-width="0.8"/><path d="M6.2 7.6 L9.6 11 L7.4 13.4 L3.8 10 Z" fill="#a8a4a8" stroke="#7a767a" stroke-width="0.6"/><path d="M3.8 10 L7.4 13.4 L4.6 16.2 L0.8 16.2 L0.8 13 Z" fill="#fff3b8" stroke="#e8cc6a" stroke-width="0.6"/><path d="M13.2 3 L12.2 4" stroke="#2a4aa0" stroke-width="0.9"/></svg><svg style="left:242px;top:67px" width="8" height="5"><path d="M0 0H8L4 5Z" fill="#333"/></svg><svg style="left:274px;top:61px" width="14" height="15" viewBox="0 0 14 15"><path d="M0.6 0.6 H10 L13.4 4 V14.4 H0.6 Z" fill="#f6f8fc" stroke="#a88a50" stroke-width="1"/><path d="M2.2 3.2H5M6.4 3.2H7.6M2.2 5.6H4.8M6 5.6H8M2.2 8H6.5M2.2 10.4H5M2.2 12.4H3" stroke="#2a58c8" stroke-width="1"/><path d="M12.8 5.6 L8.6 8.6 L12.8 11.6 M8.8 8.6 H13.2" stroke="#22cc22" stroke-width="1.1" fill="none"/></svg><svg style="left:300px;top:67px" width="8" height="5"><path d="M0 0H8L4 5Z" fill="#333"/></svg><svg style="left:331px;top:60px" width="16" height="16" viewBox="0 0 16 16"><circle cx="8" cy="8" r="7.1" fill="url(#gPov)" stroke="#1a1a1a" stroke-width="1.1"/><path d="M10 14.6 A7 7 0 0 0 14.8 9" fill="none" stroke="#000" stroke-width="1.3"/><path d="M4.2 13.6 L8 5.8" stroke="#0a48d8" stroke-width="1.6" stroke-linecap="round"/><path d="M5.4 5.2 C5.8 2 12.2 1.4 12.2 4.8 C12.2 7.6 9.4 8.6 7.4 8.4" fill="none" stroke="#1a58e8" stroke-width="1.3"/><circle cx="8.7" cy="5.2" r="1.45" fill="#1464f0"/></svg><svg style="left:358px;top:67px" width="8" height="5"><path d="M0 0H8L4 5Z" fill="#333"/></svg><svg style="left:389px;top:60px" width="15" height="17" viewBox="0 0 15 17"><rect x="6.5" y="2.6" width="8" height="13.4" fill="#f0f2f6" stroke="#c8cfdc" stroke-width="0.8"/><path d="M8.4 5.4H13M8.4 7.6H13M8.4 9.8H13M8.4 12H13" stroke="#cfd6e2" stroke-width="0.8"/><rect x="7.4" y="12.6" width="2.6" height="1.6" fill="#7aa0d0"/><path d="M3 0.6 H7 V5.6 H9.6 L5 11 L0.4 5.6 H3 Z" fill="#fae8b8" stroke="#d4aa60" stroke-width="0.9"/></svg><svg style="left:416px;top:67px" width="8" height="5"><path d="M0 0H8L4 5Z" fill="#888"/></svg><svg style="left:434px;top:60px" width="15" height="17" viewBox="0 0 15 17"><rect x="6.5" y="0.6" width="8" height="13.4" fill="#f0f2f6" stroke="#c8cfdc" stroke-width="0.8"/><path d="M8.4 3.4H13M8.4 5.6H13M8.4 7.8H13M8.4 10H13" stroke="#cfd6e2" stroke-width="0.8"/><rect x="7.4" y="1.6" width="2.6" height="1.6" fill="#7aa0d0"/><path d="M3 16.4 H7 V11.4 H9.6 L5 6 L0.4 11.4 H3 Z" fill="#fae8b8" stroke="#d4aa60" stroke-width="0.9"/></svg><svg style="left:461px;top:67px" width="8" height="5"><path d="M0 0H8L4 5Z" fill="#888"/></svg><svg style="left:480px;top:60px" width="17" height="15" viewBox="0 0 17 15"><path d="M15.6 5.4 H9.4 V2 L3.2 7.6 L9.4 13.2 V9.8 H15.6 Z" fill="#fbd66a" stroke="#c88a18" stroke-width="1"/><path d="M3.4 0.6V6M0.6 3.3H6.2M1.4 1.3L5.4 5.3M5.4 1.3L1.4 5.3" stroke="#2a5ab0" stroke-width="0.9"/></svg><svg style="left:508px;top:61px" width="16" height="14" viewBox="0 0 16 14"><path d="M15 4.6 H8.2 V1 L1.2 7 L8.2 13 V9.4 H15 Z" fill="#fbd66a" stroke="#c88a18" stroke-width="1.1"/></svg><svg style="left:535px;top:67px" width="8" height="5"><path d="M0 0H8L4 5Z" fill="#222"/></svg><svg style="left:554px;top:61px" width="16" height="14" viewBox="0 0 16 14"><path d="M1 4.6 H7.8 V1 L14.8 7 L7.8 13 V9.4 H1 Z" fill="#f3ebcc" stroke="#dccb9a" stroke-width="1.1"/></svg><svg style="left:581px;top:67px" width="8" height="5"><path d="M0 0H8L4 5Z" fill="#888"/></svg><div class="a" style="left:1411px;top:53px;width:84px;height:30px;background:#fbfbfb;border:1px solid #8e8e8e;border-radius:4px"></div><div class="t" style="left:1416px;top:60px;color:#8c8c8c;font-size:12.3px">Quick Access</div><div class="a" style="left:1502px;top:55px;width:1px;height:2px;background:#8c8872"></div><div class="a" style="left:1502px;top:61px;width:1px;height:2px;background:#8c8872"></div><div class="a" style="left:1502px;top:67px;width:1px;height:2px;background:#8c8872"></div><div class="a" style="left:1502px;top:74px;width:1px;height:2px;background:#8c8872"></div><div class="a" style="left:1502px;top:80px;width:1px;height:2px;background:#8c8872"></div><div class="a" style="left:1507px;top:49px;width:1px;height:40px;background:#b8b8b8"></div><svg style="left:1522px;top:61px" width="16" height="15" viewBox="0 0 16 15"><rect x="0.5" y="3.5" width="12" height="11" fill="#eef4fa" stroke="#a08a5a" stroke-width="0.9"/><rect x="1" y="4" width="11" height="2.2" fill="#3a8ad8"/><path d="M6.5 6V14.5M0.5 10H12.5" stroke="#a08a5a" stroke-width="0.8"/><path d="M12.2 0.6 L13.3 3 L15.6 4 L13.3 5 L12.2 7.4 L11.1 5 L8.8 4 L11.1 3 Z" fill="#fff6d0" stroke="#c89a2a" stroke-width="0.8"/></svg><div class="a" style="left:1550px;top:55px;width:1px;height:28px;background:#c0c0c0"></div><svg style="left:1563px;top:60px" width="17" height="17" viewBox="0 0 17 17"><rect x="0.5" y="0.5" width="12" height="12" fill="#eef4fa" stroke="#8a7a5a" stroke-width="0.9"/><rect x="1" y="1" width="11" height="2.2" fill="#3a8ad8"/><path d="M6 3V12.5M0.5 7.5H12.5" stroke="#8a7a5a" stroke-width="0.8"/><rect x="7.5" y="7.5" width="9" height="9" fill="#fff" stroke="#8a7a5a" stroke-width="0.9"/><text x="12" y="15.6" font-family="Liberation Sans" font-weight="bold" font-size="8.5" text-anchor="middle" fill="#2a5aa8">C</text></svg><div class="a" style="left:1585px;top:56px;width:26px;height:26px;background:#a9a9a9;border:1px solid #8c8c8c;border-radius:3px"></div><svg style="left:1590px;top:61px" width="16" height="16" viewBox="0 0 16 16"><rect x="0" y="0" width="16" height="16" fill="url(#gGold)"/><circle cx="7.2" cy="5.8" r="5.5" fill="url(#gGlow)"/><path d="M6 8.8 C4 6 6.4 1.4 10 1.6 C13.6 1.8 14.4 6.2 12 8.4 C10.8 9.6 8.8 10 7.6 9.4" fill="none" stroke="#6a4a18" stroke-width="1.2" opacity="0.7"/><path d="M8.4 9.8 L5 15.6" stroke="#4a3410" stroke-width="1.5" opacity="0.9"/></svg><svg style="left:11px;top:102px" width="17" height="14" viewBox="0 0 17 14"><path d="M1.5 1.5H4L4.8 2.3H6.6V6.6H1.5Z" fill="#fff3b0" stroke="#b87a30" stroke-width="1"/><path d="M8 4.1H14" stroke="#5a9ad8" stroke-width="1"/><path d="M3 7V10.5H6" stroke="#3a6ac0" stroke-width="1" fill="none"/><path d="M6.5 7.5H9L9.8 8.3H11.6V12.6H6.5Z" fill="#fff3b0" stroke="#b87a30" stroke-width="1"/><path d="M13 10.1H16" stroke="#5a9ad8" stroke-width="1"/></svg><svg style="left:94px;top:104px" width="11" height="11"><path d="M0.8 2.3 L2.3 0.8 L5.5 4 L8.7 0.8 L10.2 2.3 L7 5.5 L10.2 8.7 L8.7 10.2 L5.5 7 L2.3 10.2 L0.8 8.7 L4 5.5 Z" fill="#fff" stroke="#000" stroke-width="1.05" stroke-linejoin="round"/></svg><svg style="left:188px;top:102px" width="16" height="13" viewBox="0 0 16 13"><path d="M15 4.4 H8 V1 L1 6.5 L8 12 V8.6 H15 Z" fill="#f5e6c0" stroke="#d8b878" stroke-width="1"/></svg><svg style="left:215px;top:102px" width="16" height="13" viewBox="0 0 16 13"><path d="M1 4.4 H8 V1 L15 6.5 L8 12 V8.6 H1 Z" fill="#f5e6c0" stroke="#d8b878" stroke-width="1"/></svg><svg style="left:242px;top:101px" width="15" height="15" viewBox="0 0 15 15"><path d="M0.6 2.6H5L6 3.6H13.4V12.4H0.6Z" fill="#f2e2b8" stroke="#d4b070" stroke-width="0.9"/><path d="M7 14.5 C5 12 5.5 8.6 8 7.6 M5.8 6.6 L8.4 7.4 L7.6 10" fill="none" stroke="#5aa0d0" stroke-width="1.4"/></svg><div class="a" style="left:270px;top:96px;width:1px;height:26px;background:#c2c2c2"></div><svg style="left:284px;top:102px" width="15" height="15" viewBox="0 0 15 15"><rect x="0.6" y="0.6" width="11" height="11" fill="#dfeaf8" stroke="#6a8ec8" stroke-width="0.9"/><rect x="3.4" y="3.4" width="11" height="11" fill="#e8f0fa" stroke="#5a82c4" stroke-width="1"/><rect x="5.6" y="8.3" width="6.6" height="1.6" fill="#1e4a9a"/></svg><svg style="left:310px;top:100px" width="17" height="17" viewBox="0 0 17 17"><path d="M1 4.6 L5.6 0.8 V3 H12 V6.2 H5.6 V8.4 Z" fill="#fbe7a8" stroke="#c8901e" stroke-width="1"/><path d="M16 12.4 L11.4 16.2 V14 H5 V10.8 H11.4 V8.6 Z" fill="#fbe7a8" stroke="#c8901e" stroke-width="1"/></svg><div class="a" style="left:338px;top:96px;width:1px;height:26px;background:#c2c2c2"></div><svg style="left:352px;top:102px" width="15" height="14" viewBox="0 0 15 14"><circle cx="4.5" cy="4.2" r="3.3" fill="#e2e2e2" stroke="#c4c4c4" stroke-width="0.8"/><circle cx="10.6" cy="5.6" r="3.3" fill="#e2e2e2" stroke="#c4c4c4" stroke-width="0.8"/><circle cx="5.6" cy="9.8" r="3.5" fill="#b8b2d6" stroke="#a49ec4" stroke-width="0.8"/></svg><div class="a" style="left:378px;top:93px;width:3px;height:32px;background:#ececec"></div><svg style="left:394px;top:104px" width="11" height="6"><path d="M1 0.8H10L5.5 5Z" fill="#fff" stroke="#000" stroke-width="1.3" stroke-linejoin="miter"/></svg><svg style="left:425px;top:104px" width="11" height="5"><rect x="0.75" y="0.75" width="9.5" height="3.5" fill="#fff" stroke="#000" stroke-width="1.5"/></svg><svg style="left:451px;top:103px" width="11" height="11"><rect x="0.7" y="0.7" width="9.6" height="9.6" fill="#fff" stroke="#000" stroke-width="1.4"/><line x1="0.7" y1="2.6" x2="10.3" y2="2.6" stroke="#000" stroke-width="0.9"/></svg><svg style="left:16px;top:138px" width="9" height="6"><path d="M0 0H9L4.5 6Z" fill="#6e6e6e"/></svg><svg style="left:31px;top:131px" width="16" height="13" viewBox="0 0 16 13"><path d="M0.6 2.4 C0.6 1 1.4 0.6 2.4 0.6 H5.4 L6.6 2 H8 V11.6 H1.6 C1 11.6 0.6 11.2 0.6 10.6 Z" fill="url(#gFold)" stroke="#9a9ab0" stroke-width="0.9"/><path d="M1 11.8 L5 6.4 C6.4 5.6 9.6 5.8 14.6 6 L11 11.8 Z" fill="#b8d8f8" stroke="#2a40c0" stroke-width="1"/><rect x="9.6" y="0.6" width="5.6" height="5" rx="1" fill="#fff" stroke="#1a5aa8" stroke-width="1"/><circle cx="12.2" cy="3" r="1.3" fill="#1a4a98"/><path d="M9.4 4.6 L7 7.4" stroke="#1a5aa8" stroke-width="0.8" stroke-dasharray="1 1"/></svg><svg style="left:50px;top:154px" width="14" height="16" viewBox="0 0 14 16"><path d="M0.6 0.6 H8.6 L12 4 V14.4 H0.6 Z" fill="#f0f3fa" stroke="#a8883a" stroke-width="1"/><path d="M8.6 0.6 V4 H12 Z" fill="#dcb460"/><path d="M2.2 3.3H6.8M2.2 5.6H10" stroke="#4a62a8" stroke-width="0.9"/><ellipse cx="3.3" cy="10.8" rx="1.25" ry="2.1" fill="none" stroke="#0f2050" stroke-width="1.15"/><rect x="6.1" y="8.5" width="1.4" height="4.5" fill="#0f2050"/><ellipse cx="11.3" cy="10.8" rx="1.25" ry="2.1" fill="#eef2fa" stroke="#0f2050" stroke-width="1.15"/></svg><svg style="left:50px;top:177px" width="14" height="16" viewBox="0 0 14 16"><path d="M0.6 0.6 H8.6 L12 4 V14.4 H0.6 Z" fill="#f0f3fa" stroke="#a8883a" stroke-width="1"/><path d="M8.6 0.6 V4 H12 Z" fill="#dcb460"/><path d="M2.2 3.3H6.8M2.2 5.6H10" stroke="#4a62a8" stroke-width="0.9"/><ellipse cx="3.3" cy="10.8" rx="1.25" ry="2.1" fill="none" stroke="#0f2050" stroke-width="1.15"/><rect x="6.1" y="8.5" width="1.4" height="4.5" fill="#0f2050"/><ellipse cx="11.3" cy="10.8" rx="1.25" ry="2.1" fill="#eef2fa" stroke="#0f2050" stroke-width="1.15"/></svg><svg style="left:50px;top:200px" width="14" height="16" viewBox="0 0 14 16"><path d="M0.6 0.6 H8.6 L12 4 V14.4 H0.6 Z" fill="#f0f3fa" stroke="#a8883a" stroke-width="1"/><path d="M8.6 0.6 V4 H12 Z" fill="#dcb460"/><path d="M2.2 3.3H6.8M2.2 5.6H10" stroke="#4a62a8" stroke-width="0.9"/><ellipse cx="3.3" cy="10.8" rx="1.25" ry="2.1" fill="none" stroke="#0f2050" stroke-width="1.15"/><rect x="6.1" y="8.5" width="1.4" height="4.5" fill="#0f2050"/><ellipse cx="11.3" cy="10.8" rx="1.25" ry="2.1" fill="#eef2fa" stroke="#0f2050" stroke-width="1.15"/></svg><svg style="left:50px;top:223px" width="14" height="16" viewBox="0 0 14 16"><path d="M0.6 0.6 H8.6 L12 4 V14.4 H0.6 Z" fill="#f0f3fa" stroke="#a8883a" stroke-width="1"/><path d="M8.6 0.6 V4 H12 Z" fill="#dcb460"/><path d="M2.2 3.3H6.8M2.2 5.6H10" stroke="#4a62a8" stroke-width="0.9"/><ellipse cx="3.3" cy="10.8" rx="1.25" ry="2.1" fill="none" stroke="#0f2050" stroke-width="1.15"/><rect x="6.1" y="8.5" width="1.4" height="4.5" fill="#0f2050"/><ellipse cx="11.3" cy="10.8" rx="1.25" ry="2.1" fill="#eef2fa" stroke="#0f2050" stroke-width="1.15"/></svg><svg style="left:50px;top:246px" width="14" height="16" viewBox="0 0 14 16"><path d="M0.6 0.6 H8.6 L12 4 V14.4 H0.6 Z" fill="#f0f3fa" stroke="#a8883a" stroke-width="1"/><path d="M8.6 0.6 V4 H12 Z" fill="#dcb460"/><path d="M2.2 3.3H6.8M2.2 5.6H10" stroke="#4a62a8" stroke-width="0.9"/><ellipse cx="3.3" cy="10.8" rx="1.25" ry="2.1" fill="none" stroke="#0f2050" stroke-width="1.15"/><rect x="6.1" y="8.5" width="1.4" height="4.5" fill="#0f2050"/><ellipse cx="11.3" cy="10.8" rx="1.25" ry="2.1" fill="#eef2fa" stroke="#0f2050" stroke-width="1.15"/></svg><svg style="left:48px;top:269px" width="16" height="16" viewBox="0 0 16 16"><circle cx="8" cy="8" r="7.1" fill="url(#gPov)" stroke="#1a1a1a" stroke-width="1.1"/><path d="M10 14.6 A7 7 0 0 0 14.8 9" fill="none" stroke="#000" stroke-width="1.3"/><path d="M4.2 13.6 L8 5.8" stroke="#0a48d8" stroke-width="1.6" stroke-linecap="round"/><path d="M5.4 5.2 C5.8 2 12.2 1.4 12.2 4.8 C12.2 7.6 9.4 8.6 7.4 8.4" fill="none" stroke="#1a58e8" stroke-width="1.3"/><circle cx="8.7" cy="5.2" r="1.45" fill="#1464f0"/></svg><svg style="left:49px;top:293px" width="14" height="14" viewBox="0 0 14 14"><circle cx="7" cy="7" r="6.4" fill="url(#gGlobe)"/><path d="M8.4 1.6 C7 3.6 9.4 5.6 7.8 7.6 C6.8 9 8.4 11.6 9.8 12.6 C10.6 11 10.2 9.4 11.8 8.6 C11 7.6 9.6 7.4 10 5.8 C11 5.2 12 4.6 11.6 3.2 C10.6 2.4 9.6 2 8.4 1.6 Z" fill="#86a850" opacity="0.9"/><path d="M2 8 C3 10 4 11 5.6 12.4" stroke="#86a850" stroke-width="1.2" fill="none" opacity="0.7"/><circle cx="4.8" cy="4.6" r="2.8" fill="#fff" opacity="0.6"/></svg><svg style="left:48px;top:315px" width="16" height="16" viewBox="0 0 16 16"><circle cx="8" cy="8" r="7.1" fill="url(#gPov)" stroke="#1a1a1a" stroke-width="1.1"/><path d="M10 14.6 A7 7 0 0 0 14.8 9" fill="none" stroke="#000" stroke-width="1.3"/><path d="M4.2 13.6 L8 5.8" stroke="#0a48d8" stroke-width="1.6" stroke-linecap="round"/><path d="M5.4 5.2 C5.8 2 12.2 1.4 12.2 4.8 C12.2 7.6 9.4 8.6 7.4 8.4" fill="none" stroke="#1a58e8" stroke-width="1.3"/><circle cx="8.7" cy="5.2" r="1.45" fill="#1464f0"/></svg><svg style="left:491px;top:102px" width="16" height="16" viewBox="0 0 16 16"><circle cx="8" cy="8" r="7.1" fill="url(#gPov)" stroke="#1a1a1a" stroke-width="1.1"/><path d="M10 14.6 A7 7 0 0 0 14.8 9" fill="none" stroke="#000" stroke-width="1.3"/><path d="M4.2 13.6 L8 5.8" stroke="#0a48d8" stroke-width="1.6" stroke-linecap="round"/><path d="M5.4 5.2 C5.8 2 12.2 1.4 12.2 4.8 C12.2 7.6 9.4 8.6 7.4 8.4" fill="none" stroke="#1a58e8" stroke-width="1.3"/><circle cx="8.7" cy="5.2" r="1.45" fill="#1464f0"/></svg><svg style="left:593px;top:102px" width="16" height="16" viewBox="0 0 16 16"><circle cx="8" cy="8" r="7.1" fill="url(#gPov)" stroke="#1a1a1a" stroke-width="1.1"/><path d="M10 14.6 A7 7 0 0 0 14.8 9" fill="none" stroke="#000" stroke-width="1.3"/><path d="M4.2 13.6 L8 5.8" stroke="#0a48d8" stroke-width="1.6" stroke-linecap="round"/><path d="M5.4 5.2 C5.8 2 12.2 1.4 12.2 4.8 C12.2 7.6 9.4 8.6 7.4 8.4" fill="none" stroke="#1a58e8" stroke-width="1.3"/><circle cx="8.7" cy="5.2" r="1.45" fill="#1464f0"/></svg><svg style="left:680px;top:104px" width="11" height="11"><path d="M0.8 2.3 L2.3 0.8 L5.5 4 L8.7 0.8 L10.2 2.3 L7 5.5 L10.2 8.7 L8.7 10.2 L5.5 7 L2.3 10.2 L0.8 8.7 L4 5.5 Z" fill="#fff" stroke="#000" stroke-width="1.05" stroke-linejoin="round"/></svg><svg style="left:1111px;top:104px" width="11" height="5"><rect x="0.75" y="0.75" width="9.5" height="3.5" fill="#fff" stroke="#000" stroke-width="1.5"/></svg><svg style="left:1138px;top:103px" width="11" height="11"><rect x="0.7" y="0.7" width="9.6" height="9.6" fill="#fff" stroke="#000" stroke-width="1.4"/><line x1="0.7" y1="2.6" x2="10.3" y2="2.6" stroke="#000" stroke-width="0.9"/></svg><svg style="left:12px;top:569px" width="16" height="16" viewBox="0 0 16 16"><rect x="0" y="0" width="16" height="16" fill="url(#gGold)"/><circle cx="7.2" cy="5.8" r="5.5" fill="url(#gGlow)"/><path d="M6 8.8 C4 6 6.4 1.4 10 1.6 C13.6 1.8 14.4 6.2 12 8.4 C10.8 9.6 8.8 10 7.6 9.4" fill="none" stroke="#6a4a18" stroke-width="1.2" opacity="0.7"/><path d="M8.4 9.8 L5 15.6" stroke="#4a3410" stroke-width="1.5" opacity="0.9"/></svg><svg style="left:103px;top:571px" width="11" height="11"><path d="M0.8 2.3 L2.3 0.8 L5.5 4 L8.7 0.8 L10.2 2.3 L7 5.5 L10.2 8.7 L8.7 10.2 L5.5 7 L2.3 10.2 L0.8 8.7 L4 5.5 Z" fill="#fff" stroke="#000" stroke-width="1.05" stroke-linejoin="round"/></svg><svg style="left:128px;top:568px" width="15" height="16" viewBox="0 0 15 16"><path d="M0.6 0.6 H10 L14.4 5 V15.4 H0.6 Z" fill="#f6f8fc" stroke="#a88a50" stroke-width="1"/><path d="M2.4 3.6H5M6.4 3.6H8M2.4 6H5M6.4 6H8.4M2.4 8.4H6.8M2.4 10.8H5.2M2.4 13H3.4" stroke="#2a58c8" stroke-width="1"/><path d="M13.4 6.2 L9 9.2 L13.4 12.2 M9.2 9.2 H14" stroke="#22cc22" stroke-width="1.1" fill="none"/></svg><svg style="left:425px;top:571px" width="11" height="5"><rect x="0.75" y="0.75" width="9.5" height="3.5" fill="#fff" stroke="#000" stroke-width="1.5"/></svg><svg style="left:451px;top:570px" width="11" height="11"><rect x="0.7" y="0.7" width="9.6" height="9.6" fill="#fff" stroke="#000" stroke-width="1.4"/><line x1="0.7" y1="2.6" x2="10.3" y2="2.6" stroke="#000" stroke-width="0.9"/></svg><svg style="left:285px;top:602px" width="16" height="16" viewBox="0 0 16 16"><path d="M9.6 9.6L13.8 13.8" stroke="#c4884a" stroke-width="3.4" stroke-linecap="round"/><path d="M9.8 9.8L13.6 13.6" stroke="#f0cc90" stroke-width="1.1" stroke-linecap="round"/><circle cx="6.2" cy="6.2" r="5.3" fill="#eef4fb" stroke="#d09458" stroke-width="1.3"/><path d="M4.6 3.8 L2.4 6.2 L4.6 8.6 M7.8 3.8 L10 6.2 L7.8 8.6" stroke="#000" stroke-width="1.5" fill="none"/></svg><svg style="left:312px;top:602px" width="16" height="16" viewBox="0 0 16 16"><path d="M9.6 9.6L13.8 13.8" stroke="#c4884a" stroke-width="3.4" stroke-linecap="round"/><path d="M9.8 9.8L13.6 13.6" stroke="#f0cc90" stroke-width="1.1" stroke-linecap="round"/><circle cx="6.2" cy="6.2" r="5.3" fill="#eef4fb" stroke="#d09458" stroke-width="1.3"/></svg><svg style="left:339px;top:609px" width="8" height="5"><path d="M0 0H8L4 5Z" fill="#333"/></svg><svg style="left:358px;top:602px" width="16" height="16" viewBox="0 0 16 16"><path d="M9.6 9.6L13.8 13.8" stroke="#c4884a" stroke-width="3.4" stroke-linecap="round"/><path d="M9.8 9.8L13.6 13.6" stroke="#f0cc90" stroke-width="1.1" stroke-linecap="round"/><circle cx="6.2" cy="6.2" r="5.3" fill="#eef4fb" stroke="#d09458" stroke-width="1.3"/><path d="M3.2 6.3H9.4M6.3 3.2V9.4" stroke="#0a1a8a" stroke-width="2"/></svg><svg style="left:385px;top:602px" width="16" height="16" viewBox="0 0 16 16"><path d="M9.6 9.6L13.8 13.8" stroke="#c4884a" stroke-width="3.4" stroke-linecap="round"/><path d="M9.8 9.8L13.6 13.6" stroke="#f0cc90" stroke-width="1.1" stroke-linecap="round"/><circle cx="6.2" cy="6.2" r="5.3" fill="#eef4fb" stroke="#d09458" stroke-width="1.3"/><text x="6.2" y="8.6" font-family="Liberation Sans" font-weight="bold" font-size="6.4" text-anchor="middle" fill="#0a2a9a" letter-spacing="-0.4">1:1</text></svg><svg style="left:412px;top:602px" width="16" height="16" viewBox="0 0 16 16"><path d="M9.6 9.6L13.8 13.8" stroke="#c4884a" stroke-width="3.4" stroke-linecap="round"/><path d="M9.8 9.8L13.6 13.6" stroke="#f0cc90" stroke-width="1.1" stroke-linecap="round"/><circle cx="6.2" cy="6.2" r="5.3" fill="#eef4fb" stroke="#d09458" stroke-width="1.3"/><path d="M3.2 6.3H9.4" stroke="#0a1a8a" stroke-width="2"/></svg><svg style="left:455px;top:605px" width="11" height="6"><path d="M1 0.8H10L5.5 5Z" fill="#fff" stroke="#000" stroke-width="1.3" stroke-linejoin="miter"/></svg><svg style="left:491px;top:621px" width="16" height="16" viewBox="0 0 16 16"><rect x="0" y="0" width="16" height="16" fill="url(#gGold)"/><circle cx="7.2" cy="5.8" r="5.5" fill="url(#gGlow)"/><path d="M6 8.8 C4 6 6.4 1.4 10 1.6 C13.6 1.8 14.4 6.2 12 8.4 C10.8 9.6 8.8 10 7.6 9.4" fill="none" stroke="#6a4a18" stroke-width="1.2" opacity="0.7"/><path d="M8.4 9.8 L5 15.6" stroke="#4a3410" stroke-width="1.5" opacity="0.9"/></svg><svg style="left:647px;top:623px" width="11" height="11"><path d="M0.8 2.3 L2.3 0.8 L5.5 4 L8.7 0.8 L10.2 2.3 L7 5.5 L10.2 8.7 L8.7 10.2 L5.5 7 L2.3 10.2 L0.8 8.7 L4 5.5 Z" fill="#fff" stroke="#000" stroke-width="1.05" stroke-linejoin="round"/></svg><svg style="left:669px;top:621px" width="16" height="16" viewBox="0 0 16 16"><rect x="0" y="0" width="16" height="16" fill="url(#gGold)"/><circle cx="7.2" cy="5.8" r="5.5" fill="url(#gGlow)"/><path d="M6 8.8 C4 6 6.4 1.4 10 1.6 C13.6 1.8 14.4 6.2 12 8.4 C10.8 9.6 8.8 10 7.6 9.4" fill="none" stroke="#6a4a18" stroke-width="1.2" opacity="0.7"/><path d="M8.4 9.8 L5 15.6" stroke="#4a3410" stroke-width="1.5" opacity="0.9"/></svg><svg style="left:792px;top:620px" width="17" height="17" viewBox="0 0 17 17"><rect x="0.5" y="1.5" width="9" height="14" fill="#f6f2e6" stroke="#c8b27a" stroke-width="0.8"/><path d="M9 1.6 C12.6 1.4 14.6 2.6 14.6 5 C14.6 7 13.4 8 12 8.2 V15 C12 16 15 16 15.6 16" fill="#e4ecf6" stroke="#8aa0c0" stroke-width="1"/><circle cx="5.6" cy="5" r="2.6" fill="#e8263a"/><rect x="0.6" y="9" width="7.6" height="7.6" fill="#e02a3a"/><path d="M2.8 11.2 L6 14.4 M6 11.2 L2.8 14.4" stroke="#fff" stroke-width="1.2"/></svg><svg style="left:905px;top:619px" width="13" height="16" viewBox="0 0 13 16"><path d="M1.4 4.2 H11.6 L10.6 15 H2.4 Z" fill="#cfe6ea" stroke="#2a7ab0" stroke-width="1.1"/><rect x="0.6" y="2.6" width="11.8" height="2" rx="0.8" fill="#8ac4d8" stroke="#2a7ab0" stroke-width="0.9"/><rect x="4.6" y="0.6" width="3.8" height="2" fill="none" stroke="#2a7ab0" stroke-width="0.9"/><path d="M4.4 6V13.4M6.5 6V13.4M8.6 6V13.4" stroke="#f6fbfc" stroke-width="1.1"/></svg><svg style="left:931px;top:621px" width="14" height="13" viewBox="0 0 14 13"><path d="M7 0.6 L13.6 12.6 L0.4 12.6 Z" fill="#f4e400" stroke="#b09a00" stroke-width="0.7"/><text x="7" y="12" font-family="Liberation Sans" font-weight="bold" font-size="8.5" text-anchor="middle" fill="#1414c8">R</text></svg><svg style="left:958px;top:621px" width="14" height="13" viewBox="0 0 14 13"><path d="M7 0.6 L13.6 12.6 L0.4 12.6 Z" fill="#12d812" stroke="#0b8e0b" stroke-width="0.7"/><rect x="4.6" y="6" width="1.8" height="6.2" fill="#e00"/><rect x="6.4" y="3.2" width="1.8" height="9" fill="#1010d8"/><rect x="8.2" y="8.2" width="1.8" height="4" fill="#f6e600"/><rect x="0.5" y="11.8" width="13" height="1.3" fill="#067006"/></svg><svg style="left:985px;top:621px" width="14" height="13" viewBox="0 0 14 13"><path d="M7 0.6 L13.6 12.6 L0.4 12.6 Z" fill="#bdbdbd" stroke="#9c9c9c" stroke-width="0.7"/><path d="M4 6 L10 12 M10 6 L4 12" stroke="#fff" stroke-width="1.3"/></svg><svg style="left:1012px;top:621px" width="14" height="13" viewBox="0 0 14 13"><path d="M7 0.6 L13.6 12.6 L0.4 12.6 Z" fill="#b0b0b0" stroke="#8c8c8c" stroke-width="0.7"/><rect x="6.2" y="4.5" width="1.6" height="5" fill="#fff"/><rect x="6.2" y="10.2" width="1.6" height="1.5" fill="#fff"/></svg><svg style="left:1039px;top:619px" width="15" height="17" viewBox="0 0 15 17"><ellipse cx="7.5" cy="9.4" rx="4" ry="5" fill="#e6e6e6" stroke="#c4c4c4" stroke-width="0.9"/><circle cx="7.5" cy="3.6" r="2.2" fill="#e0e0e0" stroke="#c8c8c8" stroke-width="0.8"/><path d="M3.6 7 L0.6 5 M3.6 10 L0.6 10 M3.8 13 L1 15.6 M11.4 7 L14.4 5 M11.4 10 L14.4 10 M11.2 13 L14 15.6" stroke="#cfcfcf" stroke-width="1"/></svg><div class="a" style="left:1063px;top:612px;width:105px;height:31px;background:#e3e3e3;border-top-right-radius:5px"></div><svg style="left:1081px;top:624px" width="11" height="6"><path d="M1 0.8H10L5.5 5Z" fill="#fff" stroke="#000" stroke-width="1.3" stroke-linejoin="miter"/></svg><svg style="left:1112px;top:623px" width="11" height="5"><rect x="0.75" y="0.75" width="9.5" height="3.5" fill="#fff" stroke="#000" stroke-width="1.5"/></svg><svg style="left:1138px;top:622px" width="11" height="11"><rect x="0.7" y="0.7" width="9.6" height="9.6" fill="#fff" stroke="#000" stroke-width="1.4"/><line x1="0.7" y1="2.6" x2="10.3" y2="2.6" stroke="#000" stroke-width="0.9"/></svg><svg style="left:1178px;top:102px" width="17" height="16" viewBox="0 0 17 16"><rect x="0.6" y="0.6" width="5.4" height="5.4" fill="url(#gWin)" stroke="#2a72c0" stroke-width="1.1"/><rect x="0.6" y="9.6" width="5.4" height="5.4" fill="url(#gWin)" stroke="#2a72c0" stroke-width="1.1"/><path d="M7.6 3.3H12.6M9.2 7.4H12.6M7.6 12.3H12.6" stroke="#3a7ac0" stroke-width="1"/><rect x="7.4" y="6.4" width="1.6" height="1.8" fill="none" stroke="#3a7ac0" stroke-width="0.8"/></svg><svg style="left:1244px;top:104px" width="11" height="11"><path d="M0.8 2.3 L2.3 0.8 L5.5 4 L8.7 0.8 L10.2 2.3 L7 5.5 L10.2 8.7 L8.7 10.2 L5.5 7 L2.3 10.2 L0.8 8.7 L4 5.5 Z" fill="#fff" stroke="#000" stroke-width="1.05" stroke-linejoin="round"/></svg><svg style="left:1355px;top:102px" width="15" height="14" viewBox="0 0 15 14"><circle cx="4.5" cy="4.2" r="3.3" fill="#e2e2e2" stroke="#c4c4c4" stroke-width="0.8"/><circle cx="10.6" cy="5.6" r="3.3" fill="#e2e2e2" stroke="#c4c4c4" stroke-width="0.8"/><circle cx="5.6" cy="9.8" r="3.5" fill="#b8b2d6" stroke="#a49ec4" stroke-width="0.8"/></svg><svg style="left:1379px;top:101px" width="17" height="16" viewBox="0 0 17 16"><path d="M3 1V14M0.8 11.4 L3 14.6 L5.2 11.4" stroke="#445" stroke-width="1.1" fill="none"/><text x="10.2" y="7.6" font-family="Liberation Serif" font-weight="bold" font-size="13" text-anchor="middle" fill="#1a8a8a">a</text><text x="12.6" y="15.6" font-family="Liberation Serif" font-weight="bold" font-size="12.5" text-anchor="middle" fill="#8a2a9a">z</text></svg><div class="a" style="left:1408px;top:96px;width:1px;height:26px;background:#c6c6c6"></div><svg style="left:1422px;top:101px" width="14" height="16" viewBox="0 0 14 16"><circle cx="2.8" cy="2.8" r="2.1" fill="#4aa84a" stroke="#2a7a2a" stroke-width="0.6"/><path d="M2.8 5V14.4M1 12.6 L2.8 15 L4.6 12.6" stroke="#4a5560" stroke-width="1" fill="none"/><path d="M4.6 2.8 H7.4 V13 H9.8 M7.4 8 H9.8" stroke="#5a6470" stroke-width="0.9" fill="none"/><rect x="9.8" y="6.6" width="3" height="2.8" fill="#fff" stroke="#c8a030" stroke-width="0.9"/><rect x="9.8" y="11.6" width="3" height="2.8" fill="#fff" stroke="#c8a030" stroke-width="0.9"/></svg><svg style="left:1450px;top:101px" width="14" height="16" viewBox="0 0 14 16"><rect x="0.6" y="2.6" width="3" height="2.8" fill="#fff" stroke="#c8a030" stroke-width="0.9"/><rect x="0.6" y="7.6" width="3" height="2.8" fill="#fff" stroke="#c8a030" stroke-width="0.9"/><path d="M3.6 4 H6 V13 H9 M3.6 9 H6" stroke="#5a6470" stroke-width="0.9" fill="none"/><circle cx="10.8" cy="13.2" r="2.1" fill="#4aa84a" stroke="#2a7a2a" stroke-width="0.6"/><path d="M10.8 11V1.4M9 3.4 L10.8 1 L12.6 3.4" stroke="#4a5560" stroke-width="1" fill="none"/></svg><div class="a" style="left:1476px;top:96px;width:1px;height:26px;background:#c6c6c6"></div><svg style="left:1488px;top:101px" width="18" height="16" viewBox="0 0 18 16"><path d="M0.6 3H6.4M4.4 1 L6.6 3 L4.4 5 M0.6 13H6.4M4.4 11 L6.6 13 L4.4 15" stroke="#3a4a6a" stroke-width="1" fill="none"/><path d="M8 0.5V5.5M8 10.5V15.5" stroke="#3a4a6a" stroke-width="1"/><path d="M7.4 6.2 H12 V3.8 L16.8 8 L12 12.2 V9.8 H7.4 Z" fill="#fbe08a" stroke="#c88a18" stroke-width="1"/></svg><svg style="left:1531px;top:104px" width="11" height="6"><path d="M1 0.8H10L5.5 5Z" fill="#fff" stroke="#000" stroke-width="1.3" stroke-linejoin="miter"/></svg><svg style="left:1563px;top:104px" width="11" height="5"><rect x="0.75" y="0.75" width="9.5" height="3.5" fill="#fff" stroke="#000" stroke-width="1.5"/></svg><svg style="left:1590px;top:103px" width="11" height="11"><rect x="0.7" y="0.7" width="9.6" height="9.6" fill="#fff" stroke="#000" stroke-width="1.4"/><line x1="0.7" y1="2.6" x2="10.3" y2="2.6" stroke="#000" stroke-width="0.9"/></svg><svg style="left:1184px;top:135px" width="6" height="9"><path d="M0 0V9L5.5 4.5Z" fill="#6e6e6e"/></svg><svg style="left:1184px;top:158px" width="6" height="9"><path d="M0 0V9L5.5 4.5Z" fill="#6e6e6e"/></svg><svg style="left:1184px;top:181px" width="6" height="9"><path d="M0 0V9L5.5 4.5Z" fill="#6e6e6e"/></svg><svg style="left:1184px;top:204px" width="6" height="9"><path d="M0 0V9L5.5 4.5Z" fill="#6e6e6e"/></svg><svg style="left:1184px;top:227px" width="6" height="9"><path d="M0 0V9L5.5 4.5Z" fill="#6e6e6e"/></svg><svg style="left:1184px;top:250px" width="6" height="9"><path d="M0 0V9L5.5 4.5Z" fill="#6e6e6e"/></svg><svg style="left:1184px;top:434px" width="6" height="9"><path d="M0 0V9L5.5 4.5Z" fill="#6e6e6e"/></svg><svg style="left:1196px;top:154px" width="16" height="14" viewBox="0 0 16 14"><path d="M5.2 1 H9.8 V5.2 H14.6 V9.8 H9.8 V13.8 H5.2 V9.8 H0.6 V5.2 H5.2 Z" fill="#9ad060" stroke="#4a9a2a" stroke-width="0.9"/></svg><svg style="left:1195px;top:177px" width="17" height="15" viewBox="0 0 17 15"><rect x="0.6" y="2.6" width="15.8" height="11.8" rx="2.5" fill="#2a2a2a" stroke="#111" stroke-width="0.8"/><rect x="3.4" y="0.6" width="6" height="3" rx="1" fill="#3a3a3a"/><circle cx="11" cy="9" r="3.6" fill="#5ab8f0" stroke="#0a0a0a" stroke-width="1"/><circle cx="11" cy="9" r="1.6" fill="#cfefff"/><rect x="2" y="4.6" width="2" height="1.4" fill="#888"/></svg><svg style="left:1197px;top:199px" width="13" height="16" viewBox="0 0 13 16"><path d="M0.6 0.6 H12.4 V13.6 C9 12.6 4 15.8 0.6 14.6 Z" fill="#eef2f8" stroke="#a0aac0" stroke-width="0.9"/><circle cx="3.3" cy="3.4" r="1.1" fill="#3aa05a"/><circle cx="3.3" cy="6.8" r="1.1" fill="#3aa05a"/><circle cx="3.3" cy="10.2" r="1.1" fill="#3aa05a"/><path d="M5.4 3.4H10.6M5.4 6.8H10.6M5.4 10.2H10.6" stroke="#6a7a9a" stroke-width="0.9"/></svg><svg style="left:1198px;top:223px" width="11" height="16" viewBox="0 0 11 16"><path d="M5.5 0.8 C2.6 0.8 0.8 2.8 0.8 5.2 C0.8 7.4 2.6 8.6 3 10.6 H8 C8.4 8.6 10.2 7.4 10.2 5.2 C10.2 2.8 8.4 0.8 5.5 0.8 Z" fill="#fff3a0" stroke="#e0a020" stroke-width="1"/><rect x="3" y="10.6" width="5" height="4" rx="0.8" fill="#b8c4d4" stroke="#44566e" stroke-width="0.9"/></svg><svg style="left:1196px;top:246px" width="15" height="15" viewBox="0 0 15 15"><circle cx="7.5" cy="7.5" r="6.9" fill="url(#gBlueBall)"/></svg><svg style="left:1196px;top:430px" width="16" height="16" viewBox="0 0 16 16"><defs><linearGradient id="gTex" x1="0" y1="0.1" x2="1" y2="0.9"><stop offset="0" stop-color="#2c4a86"/><stop offset="0.45" stop-color="#3c5c9a"/><stop offset="0.75" stop-color="#aab8d4"/><stop offset="1" stop-color="#e2e6ee"/></linearGradient></defs><rect x="0" y="0" width="16" height="16" fill="url(#gTex)"/><ellipse cx="4" cy="3.5" rx="2.5" ry="1.5" fill="#c8d4ec" opacity="0.6" transform="rotate(-35 4 3.5)"/><ellipse cx="12" cy="4" rx="2" ry="1.6" fill="#d8e0f0" opacity="0.7"/><ellipse cx="8" cy="9" rx="2.4" ry="1.4" fill="#c0cce4" opacity="0.6"/><ellipse cx="13" cy="13" rx="3" ry="2" fill="#f0f2f8" opacity="0.8"/></svg><div class="a" style="left:1375px;top:1031px;width:1px;height:2px;background:#8c8872"></div><div class="a" style="left:1375px;top:1037px;width:1px;height:2px;background:#8c8872"></div><div class="a" style="left:1375px;top:1043px;width:1px;height:2px;background:#8c8872"></div><div class="a" style="left:1375px;top:1050px;width:1px;height:2px;background:#8c8872"></div></body></html>
